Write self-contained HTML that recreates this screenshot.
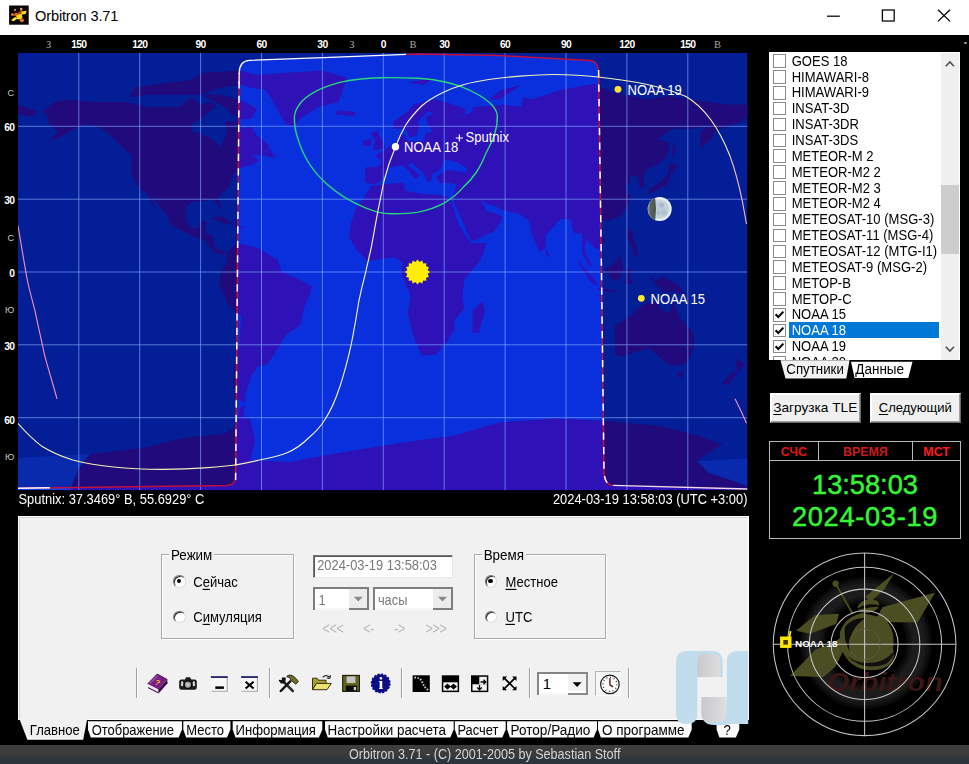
<!DOCTYPE html>
<html lang="ru"><head><meta charset="utf-8"><title>Orbitron 3.71</title>
<style>
html,body{margin:0;padding:0}
body{width:969px;height:764px;overflow:hidden;background:#000;position:relative;font-family:"Liberation Sans",sans-serif;font-size:13.2px;color:#000;line-height:1}
.a{position:absolute}
#tb{left:0;top:0;width:969px;height:34.5px;background:#fff}
#tb .ttl{left:35px;top:8.5px;font-size:14.6px;color:#000;letter-spacing:-0.15px}
#mapsvg{left:0;top:35px}
.num{font:bold 10.3px "Liberation Sans",sans-serif;fill:#fff;text-anchor:middle;letter-spacing:-0.7px}
.numl{font:bold 10.3px "Liberation Sans",sans-serif;fill:#fff;text-anchor:end;letter-spacing:-0.7px}
.let{font:10.5px "Liberation Serif",serif;fill:#a8a8a8;text-anchor:middle}
.let2{font:9.2px "Liberation Sans",sans-serif;fill:#c8c8c8;text-anchor:end}
.satl{font:13.05px "Liberation Sans",sans-serif;fill:#fff;transform-box:fill-box;transform-origin:0 81%;transform:scaleY(1.1)}
.st{color:#fff;font-size:12.9px;white-space:pre;transform:scaleY(1.13)}
/* list */
#list{left:769px;top:52px;width:190.5px;height:308.2px;background:#fff;overflow:hidden}
.row{height:15.86px;position:relative;white-space:nowrap}
.row .cb{position:absolute;left:3.6px;top:1.6px;width:11.6px;height:11.6px;border:1px solid #8a8a8a;background:#fff}
.row .lbl{position:absolute;left:19.5px;top:0;height:15.86px;line-height:16.4px;padding-left:3.2px;font-size:13.05px;color:#000}
.row .t{display:inline-block;transform:scaleY(1.15);transform-origin:50% 50%}
.row.sel .lbl{background:#0078d7;color:#fff;width:147.3px}
.ck{position:absolute;left:-0.7px;top:-0.7px;width:13px;height:13px}
.ck path{fill:none;stroke:#000;stroke-width:2}
#sbar{left:941px;top:52.6px;width:17.5px;height:307px;background:#f0f0f0}
#thumb{left:941px;top:184.5px;width:17.5px;height:69px;background:#cdcdcd}
/* buttons */
.btn{background:#f0f0f0;border:1px solid #fff;border-right-color:#696969;border-bottom-color:#696969;box-sizing:border-box;text-align:center;font-size:13.3px;box-shadow:inset -1px -1px 0 #a0a0a0,inset 1px 1px 0 #fff}
u{text-decoration:underline;text-underline-offset:1.5px}
/* clock */
#clk{left:769px;top:440.6px;width:192px;height:98px;box-sizing:border-box;border:1px solid #b8b8b8;background:#000}
#clk .h{position:absolute;top:0;height:18.6px;line-height:20.6px;text-align:center;font-weight:bold;font-size:12.4px}
#clk .t{position:absolute;left:0;width:190px;text-align:center;color:#35f535;white-space:nowrap;-webkit-text-stroke:0.45px #35f535}
/* bottom panel */
#pan{left:17.7px;top:515.8px;width:731.3px;height:203.8px;background:#f1f1f1;box-sizing:border-box;border:1.4px solid #fff;box-shadow:inset 1px 1px 0 #d4d4d4}
.grp{border:1px solid #a9a9a9;box-sizing:border-box;box-shadow:inset 1px 1px 0 #fff, 1px 1px 0 #fff}
.gl{background:#f0f0f0;padding:0 2px;font-size:13.4px;transform:scaleY(1.06);transform-origin:50% 50%}
.rad{width:12.4px;height:12.4px;border-radius:50%;box-sizing:border-box;background:#fff;border:1.5px solid #777;border-right-color:#ddd;border-bottom-color:#ddd;box-shadow:inset 1px 1px 0 #333}
.rad i{position:absolute;left:2.7px;top:2.7px;width:4.2px;height:4.2px;border-radius:50%;background:#000}
.tx{font-size:13.05px;white-space:nowrap;transform:scaleY(1.13);transform-origin:50% 50%}
.inp{background:#fff;box-sizing:border-box;border:1.5px solid #7a7a7a;border-right-color:#e8e8e8;border-bottom-color:#e8e8e8;box-shadow:inset 1px 1px 0 #555;color:#7a7a7a;font-size:12.9px}
.t2{display:inline-block;transform:scaleY(1.13);transform-origin:50% 50%}
.cmb{border:2px solid #7e7e7e;box-shadow:none}
.dd{background:#f0f0f0;box-sizing:border-box;border:1px solid #fff;border-right-color:#777;border-bottom-color:#777;box-shadow:inset -1px -1px 0 #a8a8a8}
.nav{color:#b8b8b8;font-size:12.5px;letter-spacing:-0.3px;white-space:nowrap;transform:scaleY(1.25)}
.sep{width:1px;background:#a0a0a0;box-shadow:1px 0 0 #fff;top:668px;height:30px}
.tb{top:723.1px;height:14px;line-height:14px;transform:scaleY(1.14);transform-origin:50% 50%}
.tab{position:absolute;height:17px;top:721.2px;background:#fafafa;font-size:13.2px;line-height:17px;white-space:nowrap;text-align:center}
#status{left:0;top:745px;width:969px;height:19px;background:linear-gradient(#3f3f3f 0,#3a3a3a 55%,#2e363b 75%,#2c353b 100%);color:#d4d4d4;font-size:12.6px;text-align:center}
</style></head><body>

<!-- title bar -->
<div id="tb" class="a">
 <svg class="a" style="left:8px;top:4px" width="22" height="22" viewBox="8 4 22 22"><defs><filter id="bl" x="-20%" y="-20%" width="140%" height="140%"><feGaussianBlur stdDeviation="0.55"/></filter></defs><rect x="9.100" y="5.500" width="19.600" height="19.200" fill="#0a0502"/><g filter="url(#bl)"><path d="M12 14.800 L18.500 12.500 L21.600 9.500 L23 11.500 L17 17 Z" fill="#b04a18"/><circle cx="15" cy="9.900" r="1.200" fill="#b87878"/><circle cx="21.200" cy="9" r="1.300" fill="#e0a080"/><circle cx="12.400" cy="14.500" r="1.300" fill="#e89060"/><circle cx="21.900" cy="20.200" r="2" fill="#e07c1c"/><path d="M21.600 11.500 L26.700 10.800 L25.600 14.100 L21.200 14.800Z" fill="#ffe010"/><path d="M16 15.500 L21.500 13.500 L22.500 17.500 L20 19.500 L17 19Z" fill="#ffd808"/><path d="M11 20.300 L15 17 L17.500 18.500 L13.500 21.200Z" fill="#ffe838"/><circle cx="16.100" cy="14.100" r="1.400" fill="#ec6a10"/></g></svg>
 <div class="a ttl">Orbitron 3.71</div>
 <svg class="a" style="left:820px;top:0" width="149" height="34" viewBox="820 0 149 34" fill="none" stroke="#000" stroke-width="1.25"><path d="M827 16.2 H839.8"/><rect x="882.4" y="10" width="11.8" height="11"/><path d="M938 9.8 L950 21.4 M950 9.8 L938 21.4"/></svg>
</div>

<!-- map -->
<svg id="mapsvg" class="a" width="762" height="478" viewBox="0 35 762 478">
 <defs>
  <clipPath id="mc"><rect x="18" y="52.8" width="729.5" height="437.5"/></clipPath>
  <clipPath id="day"><path d="M235.6 478 L239.2 73 Q239.4 61.2 249 60.4 L330 57.3 L418 53.9 L500 55.6 L590 60.4 Q598.3 61 598.6 72 L601.5 272 L604 472 Q604.6 485 613 485.4 L747.5 489 L747.5 490.3 L18 490.3 L18 488.2 L226 485.6 Q235.2 485 235.6 478 Z"/></clipPath>
  <path id="term" d="M18 488.2 L226 485.6 Q235.2 485 235.6 478 L239.2 73 Q239.4 61.2 249 60.4 L330 57.3 L418 53.9 L500 55.6 L590 60.4 Q598.3 61 598.6 72 L601.5 272 L604 472 Q604.6 485 613 485.4 L747.5 489"/>
  <path id="ice" d="M18.0 458.0 L50.0 456.0 L90.0 454.0 L78.0 470.0 L70.0 490.3 L18.0 490.3Z M697.0 461.3 L747.5 458.5 L747.5 486.0 L730.0 480.0 L708.0 472.4Z"/>
  <path id="land" d="M42.3 111.8 L54.4 102.0 L66.6 99.6 L97.1 102.0 L123.5 102.0 L149.9 106.9 L164.1 106.9 L180.3 106.9 L190.5 97.2 L200.6 104.5 L210.8 102.0 L216.8 106.9 L208.7 111.8 L204.7 116.6 L192.5 123.9 L192.5 131.2 L200.6 133.6 L210.8 138.5 L216.8 143.3 L220.9 148.2 L222.9 140.9 L227.0 133.6 L225.0 121.5 L237.1 121.5 L243.2 128.7 L251.4 126.3 L257.4 136.0 L269.6 145.7 L263.5 155.5 L251.4 155.5 L259.5 160.3 L251.4 165.2 L241.2 167.6 L233.1 174.9 L229.0 187.0 L218.9 196.7 L220.9 208.9 L216.8 204.0 L212.8 199.2 L200.6 201.6 L192.5 201.6 L186.4 206.4 L186.4 218.6 L190.5 228.3 L198.6 228.3 L200.6 221.0 L206.7 221.0 L204.7 233.2 L212.8 235.6 L214.8 247.7 L220.9 250.1 L227.0 252.6 L220.9 255.0 L214.8 252.6 L208.7 245.3 L204.7 240.4 L196.5 238.0 L188.4 233.2 L176.2 228.3 L170.2 223.4 L168.1 216.2 L162.0 208.9 L155.9 201.6 L151.9 196.7 L155.9 208.9 L160.0 216.2 L151.9 204.0 L145.8 191.9 L139.7 189.4 L131.6 174.9 L131.6 155.5 L123.5 148.2 L113.3 138.5 L105.2 131.2 L97.1 126.3 L84.9 123.9 L74.7 128.7 L62.6 136.0 L48.4 140.9 L58.5 131.2 L48.4 123.9 L48.4 116.6 L42.3 111.8Z M129.6 97.2 L149.9 94.8 L170.2 94.8 L190.5 94.8 L210.8 94.8 L220.9 94.8 L231.1 97.2 L245.3 102.0 L257.4 109.3 L251.4 119.0 L241.2 119.0 L231.1 114.2 L225.0 106.9 L210.8 99.6 L200.6 94.8 L220.9 87.5 L241.2 85.0 L257.4 75.3 L241.2 70.5 L200.6 72.9 L190.5 80.2 L170.2 82.6 L149.9 85.0 L133.6 87.5 L129.6 97.2Z M235.1 82.6 L249.3 87.5 L265.6 89.9 L273.7 102.0 L279.8 114.2 L285.9 123.9 L294.0 126.3 L300.1 119.0 L318.3 106.9 L338.6 102.0 L342.7 89.9 L346.8 77.8 L322.4 70.5 L281.8 72.9 L251.4 75.3 L235.1 82.6Z M227.0 252.6 L237.1 242.9 L257.4 247.7 L277.7 259.9 L281.8 272.0 L294.0 276.9 L312.2 286.6 L304.1 308.4 L300.1 325.4 L285.9 335.1 L275.7 352.1 L267.6 364.3 L257.4 366.7 L251.4 376.4 L245.3 393.4 L245.3 403.1 L235.1 398.3 L233.1 381.3 L235.1 361.8 L239.2 344.8 L241.2 315.7 L229.0 306.0 L218.9 284.1 L220.9 272.0 L227.0 262.3 L227.0 252.6Z M365.0 167.6 L379.2 166.4 L381.3 160.3 L375.2 155.5 L387.4 148.2 L393.4 143.3 L399.5 140.9 L399.5 133.6 L403.6 133.6 L407.7 140.9 L423.9 140.9 L425.9 133.6 L432.0 131.2 L430.0 126.3 L444.2 126.3 L428.0 126.3 L425.9 116.6 L434.1 113.0 L428.0 111.8 L417.8 121.5 L419.8 126.3 L415.8 136.0 L409.7 137.2 L405.6 128.7 L393.4 128.7 L393.4 121.5 L407.7 111.8 L413.8 104.5 L434.1 99.6 L446.2 102.0 L466.5 109.3 L464.5 114.2 L454.4 116.6 L458.4 116.6 L472.6 111.8 L472.6 106.9 L492.9 105.7 L505.1 104.5 L521.3 106.9 L523.4 97.2 L531.5 99.6 L545.7 94.8 L559.9 89.9 L594.4 83.8 L612.7 92.3 L647.2 99.6 L667.5 96.0 L708.1 102.0 L728.4 104.5 L748.7 104.5 L748.7 114.2 L742.6 121.5 L728.4 126.3 L714.2 131.2 L712.2 138.5 L700.0 148.2 L700.0 133.6 L708.1 123.9 L698.0 128.7 L673.6 128.7 L657.3 138.5 L669.5 143.3 L667.5 155.5 L657.3 165.2 L647.2 168.8 L643.1 177.3 L645.2 187.0 L639.1 188.2 L639.1 182.2 L637.0 176.1 L628.9 177.3 L631.0 182.2 L624.9 187.0 L631.0 196.7 L628.9 204.0 L620.8 216.2 L606.6 221.0 L602.5 219.8 L598.5 225.9 L604.6 240.4 L598.5 250.1 L594.4 247.7 L586.3 239.2 L584.3 250.1 L592.4 267.1 L588.3 264.7 L582.2 252.6 L582.2 233.2 L574.1 233.2 L570.1 218.6 L559.9 219.8 L545.7 235.6 L545.7 247.7 L539.6 252.6 L531.5 233.2 L529.5 221.0 L519.3 213.7 L507.1 211.3 L499.0 208.9 L497.0 206.4 L486.8 204.0 L480.7 199.2 L486.8 211.3 L497.0 213.7 L503.1 217.4 L494.9 230.7 L474.6 240.4 L470.6 240.4 L462.5 221.0 L454.4 204.0 L453.3 196.7 L456.4 184.6 L446.2 182.2 L440.1 183.4 L436.1 177.3 L442.2 172.5 L448.3 170.0 L466.5 172.5 L467.5 168.8 L458.4 162.7 L450.3 160.3 L444.2 160.3 L440.1 170.0 L432.0 173.7 L432.0 179.7 L428.0 182.2 L422.9 172.5 L411.7 162.7 L407.7 165.2 L419.8 174.9 L415.8 179.7 L407.7 170.0 L401.6 165.2 L389.4 167.6 L383.3 177.3 L379.2 182.2 L373.2 184.6 L365.0 182.2 L365.0 167.6Z M17.9 104.5 L38.2 111.8 L32.1 116.6 L17.9 114.2Z M371.1 185.8 L403.6 182.2 L405.6 190.7 L423.9 194.3 L434.1 194.3 L448.3 196.7 L452.3 204.0 L458.4 223.4 L470.6 242.9 L486.8 242.9 L480.7 259.9 L464.5 279.3 L462.5 296.3 L464.5 308.4 L454.4 320.6 L454.4 330.3 L448.3 340.0 L436.1 354.6 L421.9 355.8 L413.8 337.6 L407.7 313.3 L410.7 296.3 L401.6 274.4 L402.6 262.3 L393.4 257.4 L375.2 259.9 L367.1 261.1 L356.9 250.1 L348.8 236.8 L350.8 223.4 L356.9 206.4 L363.0 199.2 L371.1 185.8Z M614.7 325.4 L614.7 354.6 L622.8 357.0 L635.0 352.1 L649.2 348.5 L659.4 357.0 L667.5 364.3 L681.7 365.5 L687.8 361.8 L693.9 347.3 L693.9 332.7 L679.7 318.1 L672.6 298.7 L669.5 313.3 L659.4 308.4 L659.4 301.1 L647.2 302.4 L641.1 306.0 L631.0 315.7 L614.7 325.4Z M677.6 371.5 L683.7 371.5 L682.7 377.6 L679.7 377.6Z M472.6 332.7 L478.7 332.7 L484.8 310.8 L482.8 301.1 L472.6 310.8Z M647.2 194.3 L657.3 189.4 L667.5 185.8 L670.5 174.9 L677.6 165.2 L669.5 162.7 L667.5 174.9 L659.4 182.2 L649.2 189.4Z M373.2 150.6 L385.3 148.2 L383.3 140.9 L379.2 136.0 L377.2 130.0 L371.1 133.6 L375.2 140.9 L373.2 145.7Z M363.0 145.7 L371.1 145.7 L371.1 138.5 L363.0 140.9Z M334.6 114.2 L354.9 116.6 L354.9 111.8 L338.6 110.5Z M576.1 258.6 L594.4 279.3 L598.5 286.6 L590.4 281.7 L582.2 268.4Z M604.6 269.6 L612.7 280.5 L618.8 280.5 L622.8 269.6 L620.8 255.0 L612.7 264.7Z M596.5 287.8 L614.7 290.2 L614.7 292.6 L598.5 290.2Z M624.9 284.1 L626.9 269.6 L635.0 269.6 L628.9 274.4 L633.0 284.1Z M649.2 274.4 L655.3 280.5 L663.4 276.9 L677.6 284.1 L687.8 296.3 L675.6 291.4 L663.4 292.6 L653.3 281.7Z M626.9 228.3 L632.0 230.7 L635.0 242.9 L639.1 255.0 L635.0 256.2 L631.0 245.3 L626.9 238.0Z M734.5 357.0 L744.6 364.3 L738.5 372.8 L736.5 366.7Z M732.5 371.5 L736.5 374.0 L728.4 384.9 L721.3 383.7Z M545.7 248.9 L549.8 255.0 L546.7 257.4Z M210.8 218.6 L220.9 216.2 L233.1 223.4 L225.0 223.4Z M233.1 225.9 L245.3 227.1 L239.2 228.3Z M488.9 99.6 L499.0 99.6 L521.3 85.0 L501.0 89.9Z M407.7 82.6 L434.1 77.8 L423.9 85.0Z M671.6 160.3 L673.6 140.9 L675.6 150.6Z M263.5 155.5 L275.7 157.9 L269.6 148.2Z M70.0 490.3 L78.0 470.0 L90.0 454.0 L143.0 448.0 L183.0 438.0 L223.0 434.0 L236.0 428.0 L240.0 408.0 L245.0 404.0 L243.0 419.0 L250.0 418.0 L255.0 440.0 L251.0 460.0 L290.0 462.0 L332.0 454.0 L400.0 443.0 L455.7 435.3 L500.0 422.3 L556.0 418.6 L600.6 420.4 L660.0 426.0 L697.0 435.3 L723.0 444.6 L710.0 452.0 L697.0 461.3 L708.0 472.4 L730.0 480.0 L747.5 486.0 L747.5 490.3Z"/>
  <radialGradient id="moong" cx="0.5" cy="0.5" r="0.5"><stop offset="0" stop-color="#bccad8"/><stop offset="0.72" stop-color="#c4d2e0"/><stop offset="0.93" stop-color="#f2f8ff"/><stop offset="1" stop-color="#dce6f0"/></radialGradient><linearGradient id="moond" x1="0" x2="1"><stop offset="0" stop-color="#8c9a98"/><stop offset="0.35" stop-color="#56645c"/><stop offset="1" stop-color="#46544c"/></linearGradient>
 </defs>
 <g clip-path="url(#mc)">
  <rect x="18" y="52.8" width="729.5" height="437.5" fill="#041e98"/>
  <use href="#ice" fill="#0a2aae"/><use href="#land" fill="#200a7c"/>
  <g clip-path="url(#day)">
   <rect x="18" y="52.8" width="729.5" height="437.5" fill="#0a30de"/>
   <use href="#ice" fill="#1440e8"/><use href="#land" fill="#2e12b8"/>
  </g>
  <g stroke="#80a8ff" stroke-opacity="0.66" stroke-width="1"><line x1="78.8" y1="52.8" x2="78.8" y2="490.3"/><line x1="139.7" y1="52.8" x2="139.7" y2="490.3"/><line x1="200.6" y1="52.8" x2="200.6" y2="490.3"/><line x1="261.5" y1="52.8" x2="261.5" y2="490.3"/><line x1="322.4" y1="52.8" x2="322.4" y2="490.3"/><line x1="383.3" y1="52.8" x2="383.3" y2="490.3"/><line x1="444.2" y1="52.8" x2="444.2" y2="490.3"/><line x1="505.1" y1="52.8" x2="505.1" y2="490.3"/><line x1="566.0" y1="52.8" x2="566.0" y2="490.3"/><line x1="626.9" y1="52.8" x2="626.9" y2="490.3"/><line x1="687.8" y1="52.8" x2="687.8" y2="490.3"/><line x1="748.7" y1="52.8" x2="748.7" y2="490.3"/><line x1="18" y1="126.3" x2="747.5" y2="126.3"/><line x1="18" y1="199.2" x2="747.5" y2="199.2"/><line x1="18" y1="272.0" x2="747.5" y2="272.0"/><line x1="18" y1="344.8" x2="747.5" y2="344.8"/><line x1="18" y1="417.7" x2="747.5" y2="417.7"/></g>
  <!-- terminator -->
  <g fill="none" stroke-width="1.5">
   <path stroke="#c0103c" d="M18 488.200 L226 485.600 Q235.200 485 235.600 478 L239.200 73 M406 54.400 L418 53.900 L500 55.600 L590 60.400 Q598.300 61 598.600 72 L601.500 272 L604 472 Q604.600 485 613 485.400"/>
   <path stroke="#fff" stroke-dasharray="7.3 7.2" d="M235.600 480 L239.200 73"/>
   <path stroke="#fff" stroke-dasharray="7.3 7.2" d="M598.600 70 L601.500 272 L604 472 Q604.600 485 613 485.400"/>
   <path stroke="#fff" d="M239.100 84 L239.200 73 Q239.400 61.200 249 60.400 L330 57.300 L406 54.400" stroke-width="1.250"/>
   <path stroke="#f4d8e4" d="M613 485.400 L747.500 489" stroke-width="1.300"/>
   <path stroke="#fff" d="M18 488.200 L50 487.800" stroke-width="1.400"/>
  </g>
  <!-- footprint -->
  <path fill="none" stroke="#28d878" stroke-width="1.4" d="M380.8 77.7 C366 78 352 79.500 340 82.400 C330 85 322 88 314.800 91.800 C309 95 304 98.500 300.700 102.800 C297 107.500 294.500 112 294.400 117 C294.300 124 295.300 131 297.500 137.400 C300 146 303.500 154.500 308.500 162.500 C313.500 170.500 320 178 327.400 184.500 C336 192 345.500 198.500 355.600 203.300 C362.500 206.800 370 209.800 377.600 212.100 C382.500 213.200 388 213.800 393.300 213.700 C402 213.700 410.500 213.500 418.400 212.100 C427 210.200 435.700 207.500 443.600 203.300 C451 199 457.500 194 463 187.600 C468 183 472.500 178 476.500 172 C480.500 166 483.500 159.500 486 153 C489.500 146.500 492.800 140.500 494.600 134 C496.600 128 497.600 121.500 497.300 115.400 C496.800 111 494.500 107.500 491.400 104.400 C488 100.800 483.500 97.800 478.800 95 C473 91.800 466.500 88.600 460 86.200 C455 84.400 450 83 444 81.700 C436 80 427 78.900 418.400 78.300 C406 77.700 393 77.500 380.800 77.700 Z"/>
  <!-- track -->
  <g fill="none" stroke-width="1.15">
   <path stroke="#ee8cb8" d="M735 398.800 L741 411 L746.500 423.300"/>
   <path stroke="#f2f0b4" d="M17.900 423.300 C25 431.500 33 439.500 41.400 445.900 C51 452 62 456.500 72.800 460 C86 463.500 100 465.800 113.600 467 C130 468.800 147 469.500 164 469.400 C178 469.300 191.500 468.800 204.700 467.900 C214.500 467.200 224 466.300 233 465.300 C242 464.200 251 462 259.700 460 C269 458 277.500 456.600 286.500 453 C294 450 302 444.500 308.500 438 C314.500 433 320 427.500 324.200 420.800 C331 410.500 336 398.500 340 386.200 C344.500 372.500 348 359 351 345.400 C354 331 356.500 316 358.800 301.400 C361 291 363.500 280.500 365.700 272 C367.500 263.500 369.500 255.500 371.300 247.300 C373.500 235.500 375.500 224 377.600 212.700 C379.700 202 381.800 191.500 383.900 181.300 C387 169 391 157.500 395.500 146.800 C398.500 139 402 131.500 405.900 124.800 C410.500 117.500 416 111.500 421.600 106 C428.500 99.800 436 95.800 443.500 92.200 C450 89.200 456.500 86.800 463.200 84.800 C472 82.300 481 80.600 490.400 79.300 C500 78 510 76.800 519.800 76.100 C531.500 75.200 543 74.400 554 74.500 C569 74.800 584 75.600 598 77 C612 78.500 626.500 80.300 640 83 C656 86 672 90.500 686 96.500 C695.500 102 704 110.500 711 120 C719 131 725 143.500 730 156"/>
   <path stroke="#f0b8c0" d="M730 156 C735.500 171 739.500 187 742.700 203 L746.500 224"/>
   <path stroke="#ee8cb8" d="M17.900 225.300 C21 243 24 262 27.300 280 C29.500 290.500 32.500 301 35 310.800 C38 325.500 41.500 340.500 44.500 354.800 C48.500 369.500 53 384.500 57 398.800"/>
  </g>
  <!-- sun -->
  <polygon points="430.0,272.0 427.6,274.0 429.0,276.8 426.1,277.7 426.3,280.8 423.2,280.6 422.3,283.5 419.5,282.1 417.5,284.5 415.5,282.1 412.7,283.5 411.8,280.6 408.7,280.8 408.9,277.7 406.0,276.8 407.4,274.0 405.0,272.0 407.4,270.0 406.0,267.2 408.9,266.3 408.7,263.2 411.8,263.4 412.7,260.5 415.5,261.9 417.5,259.5 419.5,261.9 422.3,260.5 423.2,263.4 426.3,263.2 426.1,266.3 429.0,267.2 427.6,270.0" fill="#ffee00"/>
  <!-- moon -->
  <circle cx="659.7" cy="209.1" r="12.0" fill="url(#moong)"/>
  <path d="M655.2 198.0 A12.0 12.0 0 0 0 655.2 220.2 Q656.8000000000001 209.1 655.2 198.0Z" fill="url(#moond)"/>
  <circle cx="661.500" cy="205" r="2.600" fill="#9fb0c0" opacity="0.7"/><circle cx="664" cy="212.500" r="3" fill="#a8b8c8" opacity="0.6"/><circle cx="658.500" cy="213" r="1.800" fill="#9fb0c0" opacity="0.6"/>
  <!-- sats -->
  <circle cx="395.5" cy="146.8" r="3.7" fill="#fff"/>
  <circle cx="618" cy="89.3" r="3.4" fill="#ffe628"/>
  <circle cx="641.3" cy="298.3" r="3.4" fill="#ffe628"/>
  <path d="M455.8 138 H463 M459.400 134.400 V141.600" stroke="#fff" stroke-width="1.2"/>
  <text class="satl" x="404" y="152">NOAA 18</text>
  <text class="satl" x="627.5" y="95">NOAA 19</text>
  <text class="satl" x="650.6" y="303.7">NOAA 15</text>
  <text class="satl" x="465.5" y="142.2">Sputnix</text>
 </g>
 <text x="78.8" y="48.3" class="num">150</text><text x="139.7" y="48.3" class="num">120</text><text x="200.6" y="48.3" class="num">90</text><text x="261.5" y="48.3" class="num">60</text><text x="322.4" y="48.3" class="num">30</text><text x="383.3" y="48.3" class="num">0</text><text x="444.2" y="48.3" class="num">30</text><text x="505.1" y="48.3" class="num">60</text><text x="566.0" y="48.3" class="num">90</text><text x="626.9" y="48.3" class="num">120</text><text x="687.8" y="48.3" class="num">150</text><text x="48.6" y="48.3" class="let">З</text><text x="351.8" y="48.3" class="let">З</text><text x="413" y="48.3" class="let">В</text><text x="717.6" y="48.3" class="let">В</text>
 <text x="14.2" y="95.5" class="let2">С</text><text x="14.2" y="131" class="numl">60</text><text x="14.2" y="204" class="numl">30</text><text x="14.2" y="240.5" class="let2">С</text><text x="14.2" y="277" class="numl">0</text><text x="14.2" y="312.5" class="let2">Ю</text><text x="14.2" y="349.5" class="numl">30</text><text x="14.2" y="423.5" class="numl">60</text><text x="14.2" y="459.5" class="let2">Ю</text>
</svg>
<div class="a st" style="left:18.5px;top:493.5px">Sputnix: 37.3469° B, 55.6929° C</div>
<div class="a st" style="right:221.5px;top:493.5px">2024-03-19 13:58:03 (UTC +3:00)</div>

<!-- satellite list -->
<div id="list" class="a"><div style="height:0.7px"></div>
<div class="row"><span class="cb"></span><span class="lbl"><span class="t">GOES 18</span></span></div>
<div class="row"><span class="cb"></span><span class="lbl"><span class="t">HIMAWARI-8</span></span></div>
<div class="row"><span class="cb"></span><span class="lbl"><span class="t">HIMAWARI-9</span></span></div>
<div class="row"><span class="cb"></span><span class="lbl"><span class="t">INSAT-3D</span></span></div>
<div class="row"><span class="cb"></span><span class="lbl"><span class="t">INSAT-3DR</span></span></div>
<div class="row"><span class="cb"></span><span class="lbl"><span class="t">INSAT-3DS</span></span></div>
<div class="row"><span class="cb"></span><span class="lbl"><span class="t">METEOR-M 2</span></span></div>
<div class="row"><span class="cb"></span><span class="lbl"><span class="t">METEOR-M2 2</span></span></div>
<div class="row"><span class="cb"></span><span class="lbl"><span class="t">METEOR-M2 3</span></span></div>
<div class="row"><span class="cb"></span><span class="lbl"><span class="t">METEOR-M2 4</span></span></div>
<div class="row"><span class="cb"></span><span class="lbl"><span class="t">METEOSAT-10 (MSG-3)</span></span></div>
<div class="row"><span class="cb"></span><span class="lbl"><span class="t">METEOSAT-11 (MSG-4)</span></span></div>
<div class="row"><span class="cb"></span><span class="lbl"><span class="t">METEOSAT-12 (MTG-I1)</span></span></div>
<div class="row"><span class="cb"></span><span class="lbl"><span class="t">METEOSAT-9 (MSG-2)</span></span></div>
<div class="row"><span class="cb"></span><span class="lbl"><span class="t">METOP-B</span></span></div>
<div class="row"><span class="cb"></span><span class="lbl"><span class="t">METOP-C</span></span></div>
<div class="row"><span class="cb"><svg class="ck" viewBox="0 0 13 13"><path d="M2.6 6.3 L5.2 9 L10.4 3.6" /></svg></span><span class="lbl"><span class="t">NOAA 15</span></span></div>
<div class="row sel"><span class="cb"><svg class="ck" viewBox="0 0 13 13"><path d="M2.6 6.3 L5.2 9 L10.4 3.6" /></svg></span><span class="lbl"><span class="t">NOAA 18</span></span></div>
<div class="row"><span class="cb"><svg class="ck" viewBox="0 0 13 13"><path d="M2.6 6.3 L5.2 9 L10.4 3.6" /></svg></span><span class="lbl"><span class="t">NOAA 19</span></span></div>
<div class="row"><span class="cb"></span><span class="lbl"><span class="t">NOAA 20</span></span></div>
</div>
<div id="sbar" class="a"></div><div id="thumb" class="a"></div>
<svg class="a" style="left:941px;top:52px" width="18" height="309" viewBox="0 0 18 309" fill="none" stroke="#505050" stroke-width="1.6"><path d="M4.800 14.300 L8.900 10 L13 14.300"/><path d="M4.800 294.800 L8.900 299.100 L13 294.800"/></svg>
<div class="a" style="left:964px;top:42px;width:3px;height:2px;background:#999;border-radius:1px"></div>

<!-- list tabs -->
<svg class="a" style="left:770px;top:359px" width="160" height="22" viewBox="770 359 160 22"><path d="M780.5 360.200 L849.6 360.200 L846.300 378.600 L785.5 378.600 Z" fill="#f2f2f2"/><path d="M851 361.800 L912.500 361.800 L908.300 378 L854.600 378 Z" fill="#fdfdfd"/></svg>
<div class="a tx" style="left:786.3px;top:363px;font-size:13.3px;transform:scaleY(1.1)">Спутники</div>
<div class="a tx" style="left:855.3px;top:363px;font-size:13.5px;transform:scaleY(1.1)">Данные</div>

<!-- buttons -->
<div class="a btn" style="left:769.5px;top:393px;width:91.5px;height:29.8px;line-height:27.5px;font-size:13.65px"><u>З</u>агрузка TLE</div>
<div class="a btn" style="left:870px;top:393px;width:90.6px;height:29.8px;line-height:27.5px;font-size:13.0px"><u>С</u>ледующий</div>

<!-- clock -->
<div id="clk" class="a">
 <div class="h" style="left:0;width:47.600px;color:#e01616;border-right:1px solid #b8b8b8;border-bottom:1px solid #b8b8b8">СЧС</div>
 <div class="h" style="left:48.600px;width:93.600px;color:#cc1a1a;border-right:1px solid #b8b8b8;border-bottom:1px solid #b8b8b8">ВРЕМЯ</div>
 <div class="h" style="left:143.200px;width:46.800px;color:#ff1c1c;border-bottom:1px solid #b8b8b8">МСТ</div>
 <div class="t" style="top:29px;font-size:27.200px">13:58:03</div>
 <div class="t" style="top:61.800px;font-size:27.200px;letter-spacing:0.7px">2024-03-19</div>
</div>

<!-- radar -->
<svg class="a" style="left:762px;top:545px" width="207" height="200" viewBox="762 545 207 200">
 <defs><filter id="rb" x="-30%" y="-30%" width="160%" height="160%"><feGaussianBlur stdDeviation="3"/></filter><filter id="rb2"><feGaussianBlur stdDeviation="0.6"/></filter></defs>
 <circle cx="866" cy="643" r="53" fill="none" stroke="#1e1e1e" stroke-width="20" filter="url(#rb)"/>
 <g fill="#4c4e22" filter="url(#rb2)">
  <path d="M865.6 596.4 L894.1 573.2 L884.2 589.5 L869.5 602.7Z"/><path d="M882.3 607.2 L935.3 592.5 L917.6 622.3 L874.4 622.3Z"/><path d="M795.9 630.8 L815.5 615.1 L839.1 613.7 L836.1 623.9 L809.6 633.7Z"/><path d="M790.0 675.9 L815.5 649.4 L833.2 642.6 L848.9 632.7 L845.0 647.5 L835.2 667.1 L823.4 676.9Z"/>
  <ellipse cx="868.500" cy="606.200" rx="11" ry="6.500" transform="rotate(-12 868.500 606.200)"/>
  <circle cx="835.600" cy="583.700" r="3.100"/>
  <path d="M835.600 583.700 L852.800 614" stroke="#4c4e22" stroke-width="1.700" fill="none"/>
  <path d="M840 632 Q845 617 862 613 L884 618 Q896 630 893 648 Q897 662 884 668 Q866 674 852 664 Q838 652 840 632Z"/>
 </g>
 <path d="M845 627 Q852 617.500 866 618 Q858 622 853 631 Q848 640 850 652 Q843 640 845 627Z" fill="#0c0c0c"/>
 <path d="M846 655 Q862 672 886 664 Q893 659 895 650 Q884 664 866 663 Q854 662 846 655Z" fill="#101010"/>
 <path d="M858 609 Q868 603 879 606 Q870 606 858 609Z" stroke="#0c0c0c" stroke-width="1.300" fill="none"/>
 <text x="827" y="691" font-family="Liberation Sans,sans-serif" font-style="italic" font-weight="bold" font-size="25" fill="#3a1515" textLength="116" lengthAdjust="spacingAndGlyphs" filter="url(#rb2)">Orbitron</text>
 <g fill="none" stroke="#c4c4c4" stroke-width="1.050">
  <circle cx="864.6" cy="644.3" r="91.300"/><circle cx="864.6" cy="644.3" r="77"/><circle cx="864.6" cy="644.3" r="55.200"/><circle cx="864.6" cy="644.3" r="33.500"/>
  <path d="M864.600 553 V735.600 M773.300 644.300 H955.900"/>
 </g>
 <circle cx="864.6" cy="644.3" r="15.400" fill="none" stroke="#5a5a48" stroke-width="0.900"/>
 <rect x="780.800" y="637.200" width="10" height="10" fill="#ffe800" stroke="#ffe800" stroke-width="1.400"/><rect x="783.300" y="640" width="4.600" height="4.600" fill="#403800"/>
 <path d="M789.500 637 L790.500 631" stroke="#ffe800" stroke-width="1.800"/>
 <text x="795" y="647" font-family="Liberation Sans,sans-serif" font-weight="bold" font-size="9.400" fill="#fff" textLength="42.500" lengthAdjust="spacingAndGlyphs">NOAA 18</text>
</svg>

<!-- bottom panel -->
<div id="pan" class="a"></div>
<!-- watermark -->
<svg class="a" style="left:674px;top:649px;z-index:5" width="76" height="78" viewBox="674 649 76 78"><defs><linearGradient id="wg" x1="0" x2="1"><stop offset="0" stop-color="#c9c9cc"/><stop offset="1" stop-color="#dededf"/></linearGradient></defs>
<path d="M676 713.500 V662 Q676 651 687 651 H711.500 Q722.700 651 722.700 662 V677 H697.300 V713.500 Q697.300 724 686.600 724 Q676 724 676 713.500Z" fill="#c1dded"/>
<path d="M697.300 677 V661 Q697.300 653.700 705 653.700 H712 Q720.300 653.700 720.300 662.500 V677Z" fill="url(#wg)"/>
<path d="M726.800 724 V662 Q726.800 651 738 651 H748.200 V724Z" fill="#c1dded"/>
<path d="M701.400 705 V712 Q701.400 725 714.500 725 H727 V705Z" fill="#c1dded"/>
<path d="M701.400 697 H726.800 V712 Q726.800 722.200 716.500 722.200 H710 Q701.400 722.200 701.400 713.500Z" fill="url(#wg)"/>
</svg>

<!-- group Режим -->
<div class="a grp" style="left:161.200px;top:553.800px;width:132.600px;height:85.300px"></div>
<div class="a gl" style="left:169px;top:549.300px">Режим</div>
<div class="a rad" style="left:173.300px;top:575.2px"><i></i></div>
<div class="a tx" style="left:193.200px;top:575px">С<u>е</u>йчас</div>
<div class="a rad" style="left:173.300px;top:610.600px"></div>
<div class="a tx" style="left:193.200px;top:610.400px">С<u>и</u>муляция</div>

<!-- date/time controls -->
<div class="a inp" style="left:313.400px;top:555.200px;width:139.300px;height:23.300px;line-height:20.8px;padding-left:2.800px"><span class="t2">2024-03-19 13:58:03</span></div>
<div class="a inp cmb" style="left:313.400px;top:587px;width:55.800px;height:23.2px;line-height:22.3px;padding-left:3px"><span class="t2">1</span></div>
<div class="a" style="left:349px;top:589px;width:18.200px;height:19.200px;background:#ececec"></div><div class="a" style="left:315.400px;top:608.200px;width:33.600px;height:2px;background:#f6f6f6"></div>
<div class="a inp cmb" style="left:373.400px;top:587px;width:80.100px;height:23.2px;line-height:21px;padding-left:2.500px"><span class="t2">часы</span></div>
<div class="a" style="left:433.300px;top:589px;width:18.200px;height:19.200px;background:#ececec"></div><div class="a" style="left:375.400px;top:608.200px;width:57.900px;height:2px;background:#f6f6f6"></div>
<svg class="a" style="left:349px;top:589px" width="104" height="19" viewBox="349 589 104 19"><path d="M353.800 596.800 h9 l-4.500 4.800Z M438 596.800 h9 l-4.500 4.800Z" fill="#8a8a8a"/></svg>
<div class="a nav" style="left:322.500px;top:622.600px">&lt;&lt;&lt;</div>
<div class="a nav" style="left:363.200px;top:622.600px">&lt;-</div>
<div class="a nav" style="left:394.200px;top:622.600px">-&gt;</div>
<div class="a nav" style="left:425.500px;top:622.600px">&gt;&gt;&gt;</div>

<!-- group Время -->
<div class="a grp" style="left:474px;top:553.800px;width:132.200px;height:85.300px"></div>
<div class="a gl" style="left:481.700px;top:549.300px">Время</div>
<div class="a rad" style="left:484.800px;top:575.200px"><i></i></div>
<div class="a tx" style="left:505.500px;top:575px"><u>М</u>естное</div>
<div class="a rad" style="left:484.800px;top:610.600px"></div>
<div class="a tx" style="left:505.500px;top:610.400px"><u>U</u>TC</div>

<!-- toolbar -->
<div class="a sep" style="left:135.600px"></div><div class="a sep" style="left:268.500px"></div><div class="a sep" style="left:400.500px"></div><div class="a sep" style="left:529.400px"></div><div class="a sep" style="left:628.200px"></div>
<div class="a" style="left:595.400px;top:670.700px;width:26px;height:25.500px;box-sizing:border-box;border:1px solid #b4b4b4;border-right-color:#fafafa;border-bottom-color:#fafafa;background:#f5f5f5"></div>
<svg class="a" style="left:140px;top:668px" width="490" height="32" viewBox="140 668 490 32">
 <!-- book -->
 <g><path d="M147.600 684 L157.200 674.100 L167.300 679.600 L158.200 689.500 Z" fill="#7c1f84"/><path d="M147.600 684 L158.200 689.500 L158.500 692.300 L148 687 Z" fill="#f0e8f4"/><path d="M148 687 L158.500 692.300 L158.600 693.600 L148.100 688.300Z" fill="#4a1058"/><path d="M158.200 689.500 L167.300 679.600 L167.500 683.200 L158.600 693.600Z" fill="#3c0c48"/><path d="M147.600 684 L157.200 674.100 L167.300 679.600" fill="none" stroke="#3c0c48" stroke-width="0.9"/><path d="M150 683.300 L157.600 675.600" stroke="#a850b0" stroke-width="1.200"/><text x="155.300" y="684.800" font-size="7.500" font-weight="bold" fill="#ffc820" font-family="Liberation Sans,sans-serif" transform="rotate(28 157 682)">?</text></g>
 <!-- camera -->
 <g><rect x="179.200" y="679.400" width="17.600" height="10.300" rx="2.200" fill="#1c1c1c"/><path d="M184.800 680 L186 677.300 H190.200 L191.400 680Z" fill="#1c1c1c"/><circle cx="187.900" cy="684.700" r="3.700" fill="#9a9a9a" stroke="#000" stroke-width="1.100"/><circle cx="187.900" cy="684.700" r="1.700" fill="#c8c8c8"/><rect x="181" y="681.300" width="2.200" height="5" rx="1" fill="#d0d0d0"/><rect x="192.800" y="681.300" width="2.200" height="5" rx="1" fill="#d0d0d0"/></g>
 <!-- window min -->
 <g><rect x="211.400" y="677" width="15.600" height="14" fill="#f6f6f6"/><path d="M227.200 677.500 V691.300 H211.400" fill="none" stroke="#a8a8a8" stroke-width="1.100"/><rect x="210.900" y="676.200" width="16.800" height="1.700" fill="#14145c"/><rect x="215.300" y="686.400" width="8.600" height="2.500" fill="#000"/></g>
 <!-- window close -->
 <g><rect x="241.600" y="677" width="15.600" height="14" fill="#f6f6f6"/><path d="M257.400 677.500 V691.300 H241.600" fill="none" stroke="#a8a8a8" stroke-width="1.100"/><rect x="241.100" y="676.200" width="16.800" height="1.700" fill="#14145c"/><path d="M245.600 681.800 L253.600 688.500 M253.600 681.800 L245.600 688.500" stroke="#000" stroke-width="2.100"/></g>
 <!-- tools -->
 <g><path d="M292.800 691 L284.200 682.300" stroke="#2c2c30" stroke-width="2.500" stroke-linecap="round"/><path d="M279.300 680.400 L281.400 683 L284.600 682.800 L285.200 678.200 L282.400 678 L282.600 680.800 Z" fill="#111" stroke="#111" stroke-width="1.200" stroke-linejoin="round"/><path d="M280.800 691 L290.200 681.300" stroke="#1a1212" stroke-width="2.500" stroke-linecap="round"/><path d="M286.800 676.200 L289.400 675.100 L292.300 675.500 L296 678.400 L298.400 681.400 L295.600 684.300 L293.800 682.500 L291.200 680.600 L289.400 677.300 L287.200 677 Z" fill="#6e6c30" stroke="#22200a" stroke-width="0.900" stroke-linejoin="round"/></g>
 <!-- folder -->
 <g><path d="M312.500 689.700 V678.200 H317 L318.500 680.200 H326 V683.500 H316.500 L312.500 689.700Z" fill="#a8a030" stroke="#34320a" stroke-width="1"/><path d="M312.500 689.700 L316.500 683.400 H331.300 L327 689.700Z" fill="#ece470" stroke="#34320a" stroke-width="1"/><path d="M322.700 677.200 Q326 674.200 329.300 677 M330 678.300 l-3.300 -0.300 M330 678.300 l0.300 -3.200" fill="none" stroke="#202020" stroke-width="1.200"/></g>
 <!-- floppy -->
 <g><rect x="342.700" y="675.400" width="16.700" height="16" fill="#64641c" stroke="#18180a" stroke-width="1.100"/><rect x="346.600" y="676.400" width="8.800" height="6.600" fill="#c4c4c4"/><rect x="345.800" y="685.600" width="11.300" height="5.400" fill="#0c0c0c"/><rect x="353.800" y="687" width="2.300" height="3.200" fill="#d0d0d0"/></g>
 <!-- info -->
 <g><circle cx="380.700" cy="683.400" r="9.200" fill="#0c0c84"/><circle cx="380.700" cy="683.400" r="9.300" fill="none" stroke="#0c0c84" stroke-width="1.400" stroke-dasharray="2.200 1.450"/><text x="380.700" y="689.300" text-anchor="middle" font-family="Liberation Serif,serif" font-weight="bold" font-size="16.500" fill="#fff">i</text></g>
 <!-- map icons -->
 <g><rect x="412.600" y="675.300" width="17.200" height="16.700" fill="#000"/><path d="M414.300 677.500 Q420 677.500 422 681.500 Q424 687.500 428.800 690.500" fill="none" stroke="#c4c4c4" stroke-width="1.900" stroke-dasharray="1.600 1.400"/></g>
 <g><rect x="441.800" y="675.300" width="17.300" height="16.800" fill="#000"/><rect x="443.300" y="682.300" width="14.300" height="8.300" fill="#f4f4f4"/><path d="M445 686.600 H456 M444.600 686.600 l3 -2.600 v5.200Z M456.500 686.600 l-3 -2.600 v5.200Z M450.500 686.600 l-2.600 -2 v4Z M450.500 686.600 l2.600 -2 v4Z" stroke="#000" stroke-width="0.800" fill="#000"/></g>
 <g><rect x="471" y="675.300" width="17.300" height="16.800" fill="#000"/><rect x="479.300" y="676.800" width="7.500" height="7.700" fill="#f4f4f4"/><rect x="472.500" y="684.300" width="14.300" height="6.300" fill="#f4f4f4"/><path d="M480.500 682 h5 m-2 -2.300 l2.300 2.300 l-2.300 2.300 M479.500 685 v4.500 m-2.300 -2 l2.300 2.300 l2.300 -2.300" stroke="#000" stroke-width="1.300" fill="none"/></g>
 <g stroke="#000" stroke-width="1.700" fill="#000"><path d="M504 677.800 L515.200 689 M515.200 677.800 L504 689" fill="none"/><path d="M502.700 676.500 h4.400 l-4.400 4.400Z M516.500 676.500 h-4.400 l4.400 4.400Z M502.700 690.300 h4.400 l-4.400 -4.400Z M516.500 690.300 h-4.400 l4.400 -4.400Z" stroke="none"/></g>
 <!-- clock -->
 <g><circle cx="609.900" cy="684.400" r="9.300" fill="#fcfcfc" stroke="#1a1a1a" stroke-width="1.200"/><circle cx="609.900" cy="684.400" r="7" fill="none" stroke="#222" stroke-width="1.300" stroke-dasharray="0.900 2.765"/><path d="M609.900 684.800 V678.300 M609.700 684.600 L613 686.800" stroke="#5a1414" stroke-width="1.400" fill="none"/></g>
</svg>
<div class="a inp" style="left:537.300px;top:671.800px;width:50.800px;height:23.200px;line-height:21.5px;padding-left:3.5px;color:#000;font-size:14.8px;border-width:2px;border-color:#858585 #8c8c8c #8c8c8c #858585;box-shadow:none">1</div>
<div class="a" style="left:567.600px;top:673.800px;width:18.500px;height:17.600px;background:#f2f2f2"></div><div class="a" style="left:539.300px;top:693px;width:28.300px;height:2.100px;background:#f8f8f8"></div>
<svg class="a" style="left:567px;top:674px" width="20" height="20" viewBox="567 674 20 20"><path d="M572.600 682.300 h9 l-4.500 4.800Z" fill="#000"/></svg>


<!-- bottom tabs -->
<svg class="a" style="left:17px;top:718px" width="735" height="24" viewBox="17 718 735 24">
 <g fill="#fcfcfc">
  <path d="M88.0 721.2 H182.0 V729.5 L178.6 737.4 H90.8 L88.0 729.5 Z"/>
  <path d="M183.3 721.2 H230.4 V729.5 L227.0 737.4 H186.1 L183.3 729.5 Z"/>
  <path d="M232.7 721.2 H322.3 V729.5 L318.9 737.4 H235.5 L232.7 729.5 Z"/>
  <path d="M325.0 721.2 H453.7 V729.5 L450.3 737.4 H327.8 L325.0 729.5 Z"/>
  <path d="M454.8 721.2 H505.7 V729.5 L502.3 737.4 H457.6 L454.8 729.5 Z"/>
  <path d="M507.1 721.2 H597.0 V729.5 L593.6 737.4 H509.9 L507.1 729.5 Z"/>
  <path d="M598.0 721.2 H691.7 V729.5 L688.3 737.4 H600.8 L598.0 729.5 Z"/>
  <path d="M716.6 721.2 H739.3 V729.5 L735.9 737.4 H719.4 L716.6 729.5 Z"/>
 </g>
 <path d="M19.4 719 H87.2 L83.2 739.4 H27.3 Z" fill="#f0f0f0"/>
 <path d="M27.3 739 H83.2" stroke="#fff" stroke-width="1"/>
</svg>
<div class="a tx tb" style="left:29.8px;font-size:13.09px">Главное</div>
<div class="a tx tb" style="left:91.7px;font-size:12.94px">Отображение</div>
<div class="a tx tb" style="left:186.3px;font-size:12.99px">Место</div>
<div class="a tx tb" style="left:235.6px;font-size:13.11px">Информация</div>
<div class="a tx tb" style="left:327.5px;font-size:13.41px">Настройки расчета</div>
<div class="a tx tb" style="left:457.4px;font-size:12.89px">Расчет</div>
<div class="a tx tb" style="left:510.6px;font-size:13.55px">Ротор/Радио</div>
<div class="a tx tb" style="left:602px;font-size:13.47px">О программе</div>
<div class="a tx tb" style="left:723.6px;font-size:13.2px">?</div>

<div id="status" class="a"><div style="position:absolute;left:349px;top:3.400px;white-space:nowrap;transform:scaleY(1.17)">Orbitron 3.71 - (C) 2001-2005 by Sebastian Stoff</div></div>
</body></html>
